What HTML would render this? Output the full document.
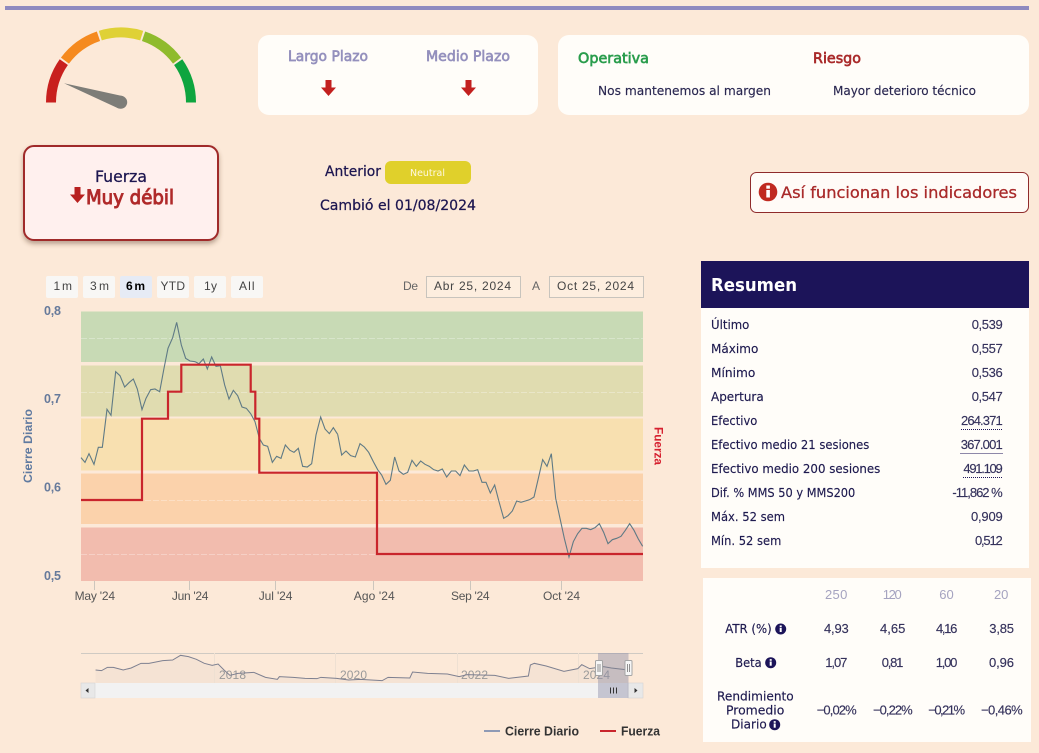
<!DOCTYPE html>
<html lang="es"><head><meta charset="utf-8"><title>Fuerza</title>
<style>
html,body{margin:0;padding:0;background:#fce9d8;overflow:hidden}
svg{display:block;position:absolute;left:0;top:0}
text{font-family:"DejaVu Sans","Liberation Sans",sans-serif;font-size:12.5px;fill:#1e1a4f;stroke:#1e1a4f;stroke-width:.15px}
.l{font-family:"Liberation Sans",sans-serif}
.b{font-weight:700}
.m{stroke-width:.65px}
.v{font-family:"Liberation Sans",sans-serif;font-size:13px;fill:#35325c;stroke:#35325c;stroke-width:.15px}
.h{font-family:"Liberation Sans",sans-serif;fill:#a5a3c0;stroke:none;font-size:13px}
.hc{font-family:"Liberation Sans",sans-serif;font-size:12px;fill:#444;stroke:none}
.ax{font-family:"Liberation Sans",sans-serif;font-size:12px;fill:#555;stroke:none}
.ya{font-family:"Liberation Sans",sans-serif;font-weight:700;font-size:12.5px;fill:#667a9b;stroke:none}
.nv{font-family:"Liberation Sans",sans-serif;font-size:12px;fill:#9a9a9a;stroke:none}
.p{vector-effect:non-scaling-stroke}
</style></head><body>
<svg width="1039" height="753" viewBox="0 0 1039 753" xmlns="http://www.w3.org/2000/svg">
<defs>
<filter id="sh" x="-10%" y="-10%" width="120%" height="125%"><feDropShadow dx="0" dy="3" stdDeviation="2.5" flood-color="#5a3a2a" flood-opacity=".4"/></filter>
<g id="inf"><circle r="5.5" fill="#1c1459"/><rect x="-1" y="-1.2" width="2" height="4.2" fill="#fff"/><rect x="-1" y="-3.6" width="2" height="1.7" fill="#fff"/></g>
<polygon id="arr" points="-3,0 3,0 3,7.5 7.5,7.5 0,16 -7.5,7.5 -3,7.5"/>
</defs>
<rect width="1039" height="753" fill="#fce9d8"/>
<rect x="5" y="6" width="1024" height="4" fill="#8f8abf"/>

<!-- gauge -->
<g fill="none" stroke-width="10">
<path d="M51 102.5A70 70 0 0 1 63.8 62.15" stroke="#c8201e"/>
<path d="M64.95 60.57A70 70 0 0 1 98.44 36.24" stroke="#f58a1f"/>
<path d="M100.3 35.63A70 70 0 0 1 141.7 35.63" stroke="#dfd136"/>
<path d="M143.56 36.24A70 70 0 0 1 177.05 60.57" stroke="#8fbb2d"/>
<path d="M178.2 62.15A70 70 0 0 1 191 102.5" stroke="#0ea53f"/>
</g>
<polygon points="64,83.3 118.6,108.5 122.8,96.1" fill="#7d7d78"/>
<circle cx="120.7" cy="102.3" r="6.5" fill="#7d7d78"/>

<!-- top cards -->
<rect x="258" y="35" width="280" height="80" rx="11" fill="#fffdf9"/>
<rect x="558" y="35" width="471" height="80" rx="11" fill="#fffdf9"/>
<text x="288" y="61" textLength="80" lengthAdjust="spacingAndGlyphs" class="m" style="font-size:14px;fill:#9490bd;stroke:#9490bd">Largo Plazo</text>
<text x="426" y="61" textLength="84" lengthAdjust="spacingAndGlyphs" class="m" style="font-size:14px;fill:#9490bd;stroke:#9490bd">Medio Plazo</text>
<use href="#arr" x="328.5" y="80" fill="#c3201f"/>
<use href="#arr" x="468.5" y="80" fill="#c3201f"/>
<text x="578" y="63" textLength="71" lengthAdjust="spacingAndGlyphs" class="m" style="font-size:14.5px;fill:#2a9d4d;stroke:#2a9d4d">Operativa</text>
<text x="813" y="63" textLength="48" lengthAdjust="spacingAndGlyphs" class="m" style="font-size:14.5px;fill:#a92a2a;stroke:#a92a2a">Riesgo</text>
<text x="598" y="95" textLength="173" lengthAdjust="spacingAndGlyphs" style="fill:#2c2a50">Nos mantenemos al margen</text>
<text x="833" y="95" textLength="143" lengthAdjust="spacingAndGlyphs" style="fill:#2c2a50">Mayor deterioro técnico</text>

<!-- Fuerza box -->
<rect x="24" y="146" width="194" height="94" rx="10" fill="#fff0ee" stroke="#a02c2c" stroke-width="2" filter="url(#sh)"/>
<text x="95" y="182" textLength="52" lengthAdjust="spacingAndGlyphs" style="font-size:16px;fill:#1d1650;stroke:#1d1650;stroke-width:.25px">Fuerza</text>
<use href="#arr" x="77.5" y="187" fill="#b8201f"/>
<text x="86" y="204" textLength="88" lengthAdjust="spacingAndGlyphs" style="font-size:19.5px;fill:#b02a2a;stroke:#b02a2a;stroke-width:.95px">Muy débil</text>

<!-- Anterior -->
<text x="325" y="176" textLength="56" lengthAdjust="spacingAndGlyphs" style="font-size:14px;fill:#1d1650;stroke:#1d1650;stroke-width:.25px">Anterior</text>
<rect x="385" y="161" width="86" height="23" rx="6" fill="#e0d02b"/>
<text x="410" y="176" textLength="35" lengthAdjust="spacingAndGlyphs" style="font-size:9.5px;fill:#fff8e0;stroke:none">Neutral</text>
<text x="320" y="210" textLength="156" lengthAdjust="spacingAndGlyphs" style="font-size:14px;fill:#1d1650;stroke:#1d1650;stroke-width:.25px">Cambió el 01/08/2024</text>

<!-- button -->
<rect x="750.5" y="172.5" width="278" height="40" rx="6" fill="#fffbf7" stroke="#8f2b2b"/>
<circle cx="768" cy="192" r="9.3" fill="#c02a20"/>
<rect x="766.3" y="190" width="3.6" height="7.5" fill="#fff"/><rect x="766.3" y="185.5" width="3.6" height="3.2" fill="#fff"/>
<text x="781" y="198" textLength="236" lengthAdjust="spacingAndGlyphs" style="font-size:16px;fill:#a92a2a;stroke:#a92a2a;stroke-width:.3px">Así funcionan los indicadores</text>

<!-- range selector -->
<g fill="#f8f7f5">
<rect x="46" y="276" width="32" height="22" rx="2"/><rect x="83" y="276" width="32" height="22" rx="2"/>
<rect x="120" y="276" width="32" height="22" rx="2" fill="#e6ebf5"/><rect x="157" y="276" width="32" height="22" rx="2"/>
<rect x="194" y="276" width="32" height="22" rx="2"/><rect x="231" y="276" width="32" height="22" rx="2"/>
</g>
<text x="53.5" y="290" textLength="18.5" class="hc">1m</text>
<text x="90" y="290" textLength="19" class="hc">3m</text>
<text x="126" y="290" textLength="19" class="hc b" style="fill:#000">6m</text>
<text x="160.5" y="290" textLength="24.5" class="hc">YTD</text>
<text x="204" y="290" textLength="13" class="hc">1y</text>
<text x="239" y="290" textLength="15.5" class="hc">All</text>
<text x="403" y="290" textLength="15" class="hc" style="fill:#666">De</text>
<rect x="426.5" y="276.5" width="94" height="21" fill="#fdeedf" stroke="#c8c4bd"/>
<text x="434" y="290" textLength="77" class="hc">Abr 25, 2024</text>
<text x="532" y="290" textLength="8" class="hc" style="fill:#666">A</text>
<rect x="549.5" y="276.5" width="94" height="21" fill="#fdeedf" stroke="#c8c4bd"/>
<text x="557" y="290" textLength="77" class="hc">Oct 25, 2024</text>

<!-- plot bands -->
<rect x="81" y="311.5" width="562" height="50.5" fill="#c8dab5"/>
<rect x="81" y="365.5" width="562" height="51" fill="#e0dcb0"/>
<rect x="81" y="418.5" width="562" height="52" fill="#f8e0b0"/>
<rect x="81" y="473.5" width="562" height="50.5" fill="#fbd2ab"/>
<rect x="81" y="527.5" width="562" height="53.5" fill="#f2bcae"/>
<g stroke="#fff" stroke-opacity=".3" stroke-dasharray="6 2" stroke-width="1">
<line x1="81" x2="643" y1="338.5" y2="338.5"/><line x1="81" x2="643" y1="392.5" y2="392.5"/>
<line x1="81" x2="643" y1="500.5" y2="500.5"/>
<line x1="81" x2="643" y1="554.5" y2="554.5"/>
</g>
<g stroke="#ccc6bd"><line x1="94.5" x2="94.5" y1="581" y2="590"/><line x1="189.5" x2="189.5" y1="581" y2="590"/><line x1="275.5" x2="275.5" y1="581" y2="590"/><line x1="373.5" x2="373.5" y1="581" y2="590"/><line x1="470.5" x2="470.5" y1="581" y2="590"/><line x1="561.5" x2="561.5" y1="581" y2="590"/></g>

<!-- price line -->
<g transform="translate(10 265) scale(.33333)"><polyline class="p" fill="none" stroke="#5f7a85" stroke-width="1.1" points="213,578 225,592 237,566 252,598 265,547 277,547 291,433 303,451 317,320 330,332 344,366 358,352 370,342 382,372 396,434 408,400 422,374 435,372 449,380 462,310 474,250 488,218 500,172 514,240 527,280 540,288 555,290 567,296 580,282 592,312 605,276 618,304 631,302 644,360 657,402 670,376 683,392 696,426 709,430 722,446 735,470 748,520 760,540 773,544 787,592 800,574 813,580 826,540 840,556 852,562 865,550 878,604 892,606 905,596 918,510 932,456 945,492 958,506 970,488 983,508"/></g>
<g transform="translate(340 265) scale(.33333)"><polyline class="p" fill="none" stroke="#5f7a85" stroke-width="1.1" points="-7,508 5,570 18,558 32,572 46,576 60,536 73,546 86,562 100,590 113,614 125,630 138,658 151,646 164,576 177,618 190,628 203,622 216,586 229,604 242,588 255,598 268,604 281,614 294,618 307,612 320,636 334,618 347,618 360,632 373,600 387,618 400,618 413,614 426,652 438,652 451,684 464,660 477,710 491,760 504,752 517,738 530,708 543,712 556,708 569,704 582,696 595,640 608,584 621,604 634,566 647,700 660,760 673,820 687,876 700,830 713,806 726,790 739,790 752,794 765,788 778,776 791,802 804,836 817,824 830,820 843,814 856,796 869,776 882,796 895,822 908,844"/></g>
<polyline fill="none" stroke="#c9252c" stroke-width="2.2" points="81,500 142,500 142,418.7 168,418.7 168,391.7 181.3,391.7 181.3,364.7 250.7,364.7 250.7,391.7 255.3,391.7 255.3,418.7 259.3,418.7 259.3,472.7 377,472.7 377,554 643,554"/>

<!-- axes text -->
<text x="44" y="315" textLength="17" class="ya">0,8</text>
<text x="44" y="403" textLength="17" class="ya">0,7</text>
<text x="44" y="491.5" textLength="17" class="ya">0,6</text>
<text x="44" y="580" textLength="17" class="ya">0,5</text>
<text transform="translate(32 483) rotate(-90)" textLength="74" lengthAdjust="spacingAndGlyphs" class="l b" style="font-size:12px;fill:#5f7aa0;stroke:none">Cierre Diario</text>
<text transform="translate(654.5 427) rotate(90)" textLength="38" lengthAdjust="spacingAndGlyphs" class="l b" style="font-size:12px;fill:#d6202f;stroke:none">Fuerza</text>
<text x="74.6" y="600" textLength="40.4" class="ax">May '24</text>
<text x="171.9" y="600" textLength="36.5" class="ax">Jun '24</text>
<text x="258.8" y="600" textLength="33.6" class="ax">Jul '24</text>
<text x="353.7" y="600" textLength="41" class="ax">Ago '24</text>
<text x="451" y="600" textLength="38.6" class="ax">Sep '24</text>
<text x="543" y="600" textLength="37" class="ax">Oct '24</text>

<!-- navigator -->
<line x1="81" x2="643" y1="653.5" y2="653.5" stroke="#cfcac3"/>
<g transform="translate(60 590) scale(.39526 .33333)">
<polygon fill="#8a8aa0" fill-opacity=".06" points="90,280 90,240 105,242 120,232 135,232 160,240 180,234 205,220 225,220 260,212 285,210 305,196 325,200 345,208 365,220 385,226 400,222 415,240 430,256 450,250 490,247 520,262 550,268 555,260 590,262 620,265 650,266 660,262 700,265 730,270 760,268 815,272 830,262 885,264 892,246 930,250 980,252 1010,260 1030,254 1100,256 1135,265 1185,258 1190,225 1200,220 1230,228 1275,244 1310,236 1320,224 1340,236 1360,232 1375,230 1395,234 1438,240 1438,280"/>
</g>
<g stroke="#eee0d2"><line x1="214.5" x2="214.5" y1="653" y2="683"/><line x1="335.5" x2="335.5" y1="653" y2="683"/><line x1="457.5" x2="457.5" y1="653" y2="683"/><line x1="578.5" x2="578.5" y1="653" y2="683"/></g>
<text x="219" y="679" textLength="27" class="nv">2018</text>
<text x="340" y="679" textLength="27" class="nv">2020</text>
<text x="461" y="679" textLength="27" class="nv">2022</text>
<text x="583" y="679" textLength="27" class="nv">2024</text>
<rect x="81" y="683" width="562" height="15" fill="#f2f2f2"/>
<rect x="81" y="683" width="14" height="15" fill="#e8e8e8" stroke="#d4d4d4" stroke-width=".6"/>
<rect x="628" y="683" width="15" height="15" fill="#e8e8e8" stroke="#d4d4d4" stroke-width=".6"/>
<polygon points="88.5,688 85.5,690.5 88.5,693" fill="#333"/>
<polygon points="634.5,688 637.5,690.5 634.5,693" fill="#333"/>
<rect x="598" y="653" width="30.5" height="45" fill="#8e8ea8" fill-opacity=".45"/>
<g transform="translate(60 590) scale(.39526 .33333)">
<polyline class="p" fill="none" stroke="#7e8090" stroke-width="1" points="90,240 105,242 120,232 135,232 160,240 180,234 205,220 225,220 260,212 285,210 305,196 325,200 345,208 365,220 385,226 400,222 415,240 430,256 450,250 490,247 520,262 550,268 555,260 590,262 620,265 650,266 660,262 700,265 730,270 760,268 815,272 830,262 885,264 892,246 930,250 980,252 1010,260 1030,254 1100,256 1135,265 1185,258 1190,225 1200,220 1230,228 1275,244 1310,236 1320,224 1340,236 1360,232 1375,230 1395,234 1438,240"/>
</g>
<g stroke="#333" stroke-width="1"><line x1="610.5" x2="610.5" y1="687.5" y2="693.5"/><line x1="613.5" x2="613.5" y1="687.5" y2="693.5"/><line x1="616.5" x2="616.5" y1="687.5" y2="693.5"/></g>
<g fill="#f6f6f6" stroke="#a5a5a5"><rect x="595.5" y="660.5" width="7" height="15" rx="1"/><rect x="625" y="660.5" width="7" height="15" rx="1"/></g>
<g stroke="#777" stroke-width=".8"><line x1="598" x2="598" y1="664" y2="672"/><line x1="600" x2="600" y1="664" y2="672"/><line x1="627.5" x2="627.5" y1="664" y2="672"/><line x1="629.5" x2="629.5" y1="664" y2="672"/></g>

<!-- legend -->
<line x1="484" x2="500" y1="731" y2="731" stroke="#8e9ab5" stroke-width="2"/>
<text x="505" y="735.5" textLength="74" lengthAdjust="spacingAndGlyphs" class="l b" style="font-size:12.5px;fill:#333;stroke:none">Cierre Diario</text>
<line x1="600" x2="616" y1="731" y2="731" stroke="#c9252c" stroke-width="2"/>
<text x="621" y="735.5" textLength="39" lengthAdjust="spacingAndGlyphs" class="l b" style="font-size:12.5px;fill:#333;stroke:none">Fuerza</text>

<!-- Resumen -->
<rect x="701" y="308" width="328" height="260" fill="#fffdf9"/>
<rect x="701" y="261" width="328" height="47" fill="#1c1459"/>
<text x="711" y="291" textLength="86" lengthAdjust="spacingAndGlyphs" class="b" style="font-size:18px;fill:#fff;stroke:none">Resumen</text>
<text x="711" y="329" textLength="38.3" lengthAdjust="spacingAndGlyphs">Último</text>
<text x="711" y="353" textLength="47.3" lengthAdjust="spacingAndGlyphs">Máximo</text>
<text x="711" y="377" textLength="44.3" lengthAdjust="spacingAndGlyphs">Mínimo</text>
<text x="711" y="401" textLength="52.7" lengthAdjust="spacingAndGlyphs">Apertura</text>
<text x="711" y="425" textLength="46.3" lengthAdjust="spacingAndGlyphs">Efectivo</text>
<text x="711" y="449" textLength="158.3" lengthAdjust="spacingAndGlyphs">Efectivo medio 21 sesiones</text>
<text x="711" y="473" textLength="169.3" lengthAdjust="spacingAndGlyphs">Efectivo medio 200 sesiones</text>
<text x="711" y="497" textLength="144.3" lengthAdjust="spacingAndGlyphs">Dif. % MMS 50 y MMS200</text>
<text x="711" y="521" textLength="74" lengthAdjust="spacingAndGlyphs">Máx. 52 sem</text>
<text x="711" y="545" textLength="70.3" lengthAdjust="spacingAndGlyphs">Mín. 52 sem</text>
<text x="971.7" y="329" textLength="31" class="v">0,539</text>
<text x="971.7" y="353" textLength="31" class="v">0,557</text>
<text x="971.7" y="377" textLength="31" class="v">0,536</text>
<text x="971.7" y="401" textLength="31" class="v">0,547</text>
<text x="961" y="425" textLength="41.7" class="v">264.371</text>
<text x="960.7" y="449" textLength="42" class="v">367.001</text>
<text x="963.4" y="473" textLength="39.3" class="v">491.109</text>
<text x="952.4" y="497" textLength="50.3" class="v">-11,862 %</text>
<text x="971" y="521" textLength="31.7" class="v">0,909</text>
<text x="975" y="545" textLength="27.7" class="v">0,512</text>
<g stroke="#1c1459" stroke-dasharray="1 1" stroke-width="1">
<line x1="961" x2="1003" y1="429.5" y2="429.5"/><line x1="960.5" x2="1003" y1="453.5" y2="453.5"/><line x1="963" x2="1003" y1="477.5" y2="477.5"/>
</g>

<!-- stats table -->
<rect x="703" y="578" width="328" height="164" fill="#fffdf9"/>
<text x="825" y="599" textLength="22.3" class="h">250</text>
<text x="882.7" y="599" textLength="19" class="h">120</text>
<text x="939.3" y="599" textLength="14.4" class="h">60</text>
<text x="994" y="599" textLength="14.3" class="h">20</text>
<text x="725.3" y="633" textLength="46.4" lengthAdjust="spacingAndGlyphs" style="font-size:12px">ATR (%)</text>
<use href="#inf" x="780.7" y="629"/>
<text x="824" y="633" textLength="24.7" class="v">4,93</text>
<text x="880" y="633" textLength="25.3" class="v">4,65</text>
<text x="936" y="633" textLength="21.3" class="v">4,16</text>
<text x="989.3" y="633" textLength="24.7" class="v">3,85</text>
<text x="735.3" y="667" textLength="26.4" lengthAdjust="spacingAndGlyphs" style="font-size:12px">Beta</text>
<use href="#inf" x="770.7" y="662.7"/>
<text x="825.3" y="667" textLength="22" class="v">1,07</text>
<text x="881.7" y="667" textLength="21.6" class="v">0,81</text>
<text x="935.7" y="667" textLength="21.6" class="v">1,00</text>
<text x="989" y="667" textLength="25" class="v">0,96</text>
<text x="717" y="700.7" textLength="76.7" lengthAdjust="spacingAndGlyphs" style="font-size:12px">Rendimiento</text>
<text x="726" y="714.7" textLength="58.3" lengthAdjust="spacingAndGlyphs" style="font-size:12px">Promedio</text>
<text x="731" y="728.7" textLength="35.7" lengthAdjust="spacingAndGlyphs" style="font-size:12px">Diario</text>
<use href="#inf" x="774.7" y="724.7"/>
<text x="816.7" y="714.7" textLength="40" class="v">−0,02%</text>
<text x="873" y="714.7" textLength="39.7" class="v">−0,22%</text>
<text x="928.3" y="714.7" textLength="36.7" class="v">−0,21%</text>
<text x="981" y="714.7" textLength="41.7" class="v">−0,46%</text>
</svg>
</body></html>
